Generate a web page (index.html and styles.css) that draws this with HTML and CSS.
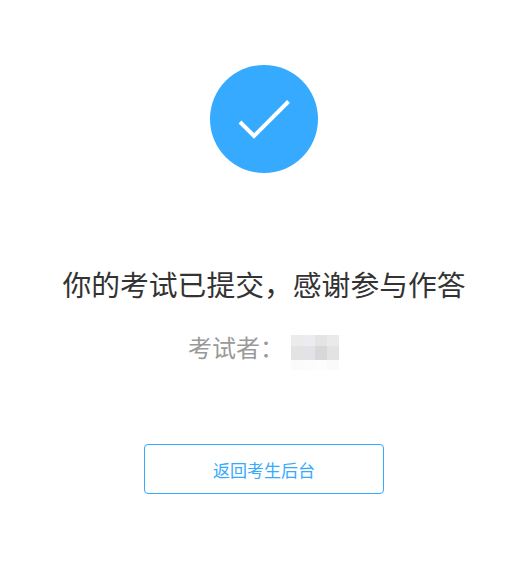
FILE: index.html
```html
<!DOCTYPE html>
<html lang="zh-CN">
<head>
<meta charset="utf-8">
<title>考试已提交</title>
<link rel="stylesheet" href="styles.css">
</head>
<body>
<main class="page">
  <div class="badge">
    <svg class="check" width="108" height="108" viewBox="0 0 108 108" aria-hidden="true">
      <path d="M30 57 L44 71 L78.5 36.5" fill="none" stroke="#fff" stroke-width="4"/>
    </svg>
  </div>
  <h1 class="title">你的考试已提交，感谢参与作答</h1>
  <div class="examinee">
    <span class="label">考试者：</span>
    <div class="mosaic" aria-hidden="true">
      <i class="c1"></i><i class="c2"></i><i class="c3"></i><i class="c4"></i>
      <i class="c5"></i><i class="c6"></i><i class="c7"></i><i class="c8"></i>
      <i class="c9"></i><i class="c10"></i><i class="c11"></i><i class="c12"></i>
    </div>
  </div>
  <a class="back" href="#">返回考生后台</a>
</main>
</body>
</html>
```
FILE: styles.css
```css
html, body { margin: 0; padding: 0; background: #fff; }
body { font-family: "Noto Sans CJK SC", "Liberation Sans", sans-serif; }
.page { display: flex; flex-direction: column; align-items: center; width: 528px; padding-top: 65px; }
.badge { width: 108px; height: 108px; border-radius: 50%; background: #35aaff; }
.check { display: block; }
.title { margin: 91px 0 0; font-size: 28.8px; line-height: 40px; font-weight: 400; color: #333; white-space: nowrap; }
.examinee { display: flex; align-items: flex-start; margin: 23px 1px 0 0; height: 46px; }
.label { font-size: 24px; line-height: 40px; color: #999; width: 103px; }
.mosaic { display: grid; grid-template-columns: repeat(4, 12px); grid-template-rows: 11px 14px 10px; margin-top: 8px; }
.c1 { background: #ebebeb; } .c2 { background: #ececf0; } .c3 { background: #e4e4e4; } .c4 { background: #eaeaea; }
.c5 { background: #e3e3e3; } .c6 { background: #e2e3e6; } .c7 { background: #d9d8d8; } .c8 { background: #e2e3e3; }
.c9 { background: #fbfbfb; } .c10 { background: #fcfcfc; } .c11 { background: #fdfdfd; } .c12 { background: #fafafa; }
.back { box-sizing: border-box; display: flex; align-items: center; justify-content: center; width: 240px; height: 50px; margin-top: 71px; border: 1px solid #35aaff; border-radius: 4px; color: #35aaff; font-size: 17px; text-decoration: none; }
```
